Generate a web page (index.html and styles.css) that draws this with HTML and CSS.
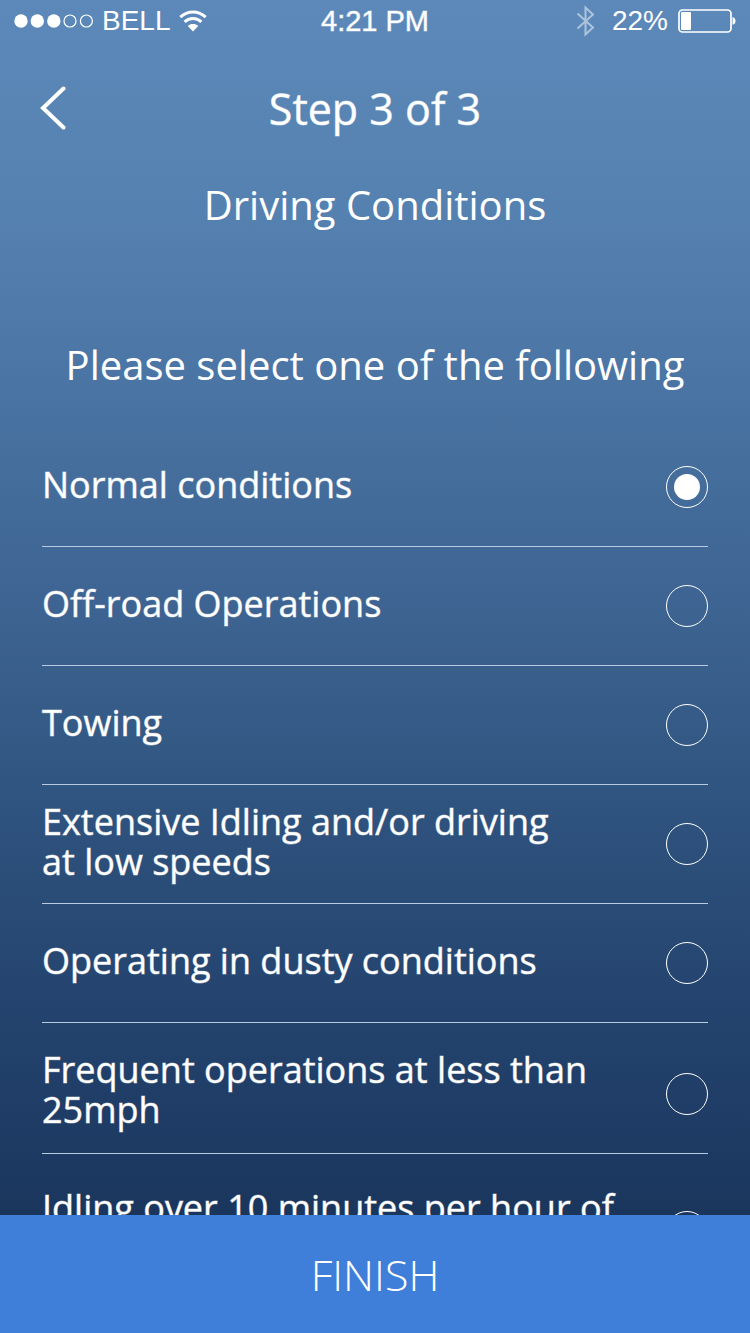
FILE: index.html
```html
<!DOCTYPE html>
<html lang="en">
<head>
    <meta charset="UTF-8">
    <meta name="viewport" content="width=device-width, initial-scale=1.0">
    <title>Driving Conditions</title>
    <link rel="stylesheet" href="styles.css">
</head>
<body>
    <form class="screen">
        <div class="status-bar">
            <div class="status-left">
                <svg class="signal" width="80" height="16" viewBox="0 0 80 16">
                    <g fill="#fff">
                        <circle cx="7" cy="8" r="6.7"/>
                        <circle cx="23.3" cy="8" r="6.7"/>
                        <circle cx="39.8" cy="8" r="6.7"/>
                    </g>
                    <g fill="none" stroke="#fff" stroke-width="1.2">
                        <circle cx="56" cy="8" r="6"/>
                        <circle cx="72.4" cy="8" r="6"/>
                    </g>
                </svg>
                <span>BELL</span>
                <svg class="wifi" width="28" height="22" viewBox="0 0 28 22">
                    <path d="M1.3 7.2C8.5 0.2 19.5 0.2 26.7 7.2M5.6 11.8C10.3 7.3 17.7 7.3 22.4 11.8" fill="none" stroke="#fff" stroke-width="3"/>
                    <path d="M14 21.5L8.8 16C11.6 13.4 16.4 13.4 19.2 16Z" fill="#fff"/>
                </svg>
            </div>
            <div class="status-time">4:21 PM</div>
            <div class="status-right">
                <svg class="bluetooth" width="20" height="32" viewBox="0 0 20 32">
                    <path d="M1.5 8.5L17 22.5L9.5 29.5V2.5L17 9.5L1.5 23.5" fill="none" stroke="#fff" stroke-width="2"/>
                </svg>
                <span>22%</span>
                <svg class="battery" width="58" height="24" viewBox="0 0 58 24">
                    <rect x="1" y="1" width="52" height="22" rx="3.5" fill="none" stroke="#fff" stroke-width="1.7"/>
                    <rect x="3" y="3" width="10" height="18" rx="1" fill="#fff"/>
                    <path d="M54.5 8.3C58.5 8.5 58.5 15.5 54.5 15.7Z" fill="#fff"/>
                </svg>
            </div>
        </div>

        <header class="header">
            <button type="button" class="back-btn" aria-label="Back">
                <svg width="26" height="44" viewBox="0 0 26 44">
                    <path d="M23.5 2.5L3 22L23.5 41.5" fill="none" stroke="#fff" stroke-width="4" stroke-linecap="round"/>
                </svg>
            </button>
            <h1>Step 3 of 3</h1>
        </header>
        <h2 class="subtitle">Driving Conditions</h2>

        <main class="content">
            <p class="prompt">Please select one of the following</p>
            <div class="options">
                <label class="option">
                    <span>Normal conditions</span>
                    <input type="radio" name="condition" checked>
                </label>
                <label class="option">
                    <span>Off-road Operations</span>
                    <input type="radio" name="condition">
                </label>
                <label class="option">
                    <span>Towing</span>
                    <input type="radio" name="condition">
                </label>
                <label class="option">
                    <span>Extensive Idling and/or driving<br>at low speeds</span>
                    <input type="radio" name="condition">
                </label>
                <label class="option">
                    <span>Operating in dusty conditions</span>
                    <input type="radio" name="condition">
                </label>
                <label class="option tall">
                    <span>Frequent operations at less than<br>25mph</span>
                    <input type="radio" name="condition">
                </label>
                <label class="option taller">
                    <span>Idling over 10 minutes per hour of<br>driving</span>
                    <input type="radio" name="condition">
                </label>
            </div>
        </main>

        <button type="submit" class="finish-btn">FINISH</button>
    </form>
</body>
</html>
```
FILE: styles.css
```css
* {
    box-sizing: border-box;
}
body {
    margin: 0;
    font-family: "Open Sans", sans-serif;
    color: #fff;
}
.screen {
    display: flex;
    flex-direction: column;
    height: 100vh;
    overflow: hidden;
    background: linear-gradient(#5c89b9 0%, #5581b0 16%, #466f9e 34%, #3b618f 48%, #2f547f 60%, #24446f 75%, #1a365d 91%);
}
.status-bar {
    display: grid;
    grid-template-columns: 1fr auto 1fr;
    align-items: center;
    height: 42px;
    padding: 0 14px;
    font-family: "Liberation Sans", Arial, sans-serif;
    font-size: 28px;
}
.status-left,
.status-right {
    display: flex;
    align-items: center;
    gap: 8px;
}
.status-right {
    justify-content: flex-end;
    gap: 10px;
}
/* faint outline gives a medium weight */
.status-time,
h1,
.option span {
    -webkit-text-stroke: 1px rgba(255, 255, 255, 0.45);
}
.status-time {
    font-size: 29px;
}
.bluetooth {
    opacity: 0.5;
    margin-right: 6px;
}
.header {
    display: grid;
    grid-template-columns: 60px 1fr 60px;
    align-items: center;
    height: 132px;
    padding: 0 40px;
}
.back-btn {
    display: flex;
    padding: 0;
    border: none;
    background: none;
    cursor: pointer;
}
h1 {
    margin: 0;
    font-size: 43px;
    font-weight: 400;
    text-align: center;
}
.subtitle {
    margin: 0;
    font-size: 40px;
    font-weight: 400;
    line-height: 62px;
    text-align: center;
}
.content {
    flex: 1;
    min-height: 0;
    overflow: hidden;
    padding: 98px 42px 0;
}
.prompt {
    margin: 0;
    font-size: 40px;
    line-height: 62px;
    text-align: center;
}
.options {
    padding-top: 32px;
}
.option {
    display: flex;
    align-items: center;
    justify-content: space-between;
    min-height: 119px;
    border-bottom: 1px solid #b9cbe2;
    font-size: 36px;
    line-height: 40px;
    cursor: pointer;
}
.option span {
    padding-bottom: 4px;
}
.option.tall {
    min-height: 131px;
    padding-top: 12px;
}
.option.taller {
    min-height: 138px;
    padding-top: 19px;
}
.option.tall span,
.option.taller span {
    padding-bottom: 8px;
}
.option input {
    appearance: none;
    flex: none;
    width: 42px;
    height: 42px;
    margin: 0;
    border: 1px solid #fff;
    border-radius: 50%;
    cursor: pointer;
}
.option input:checked {
    padding: 7px;
    background: #fff content-box;
}
.finish-btn {
    flex: none;
    height: 118px;
    border: none;
    background: #407fd9;
    color: #fff;
    font-family: inherit;
    font-size: 43px;
    font-weight: 300;
    cursor: pointer;
}
```
